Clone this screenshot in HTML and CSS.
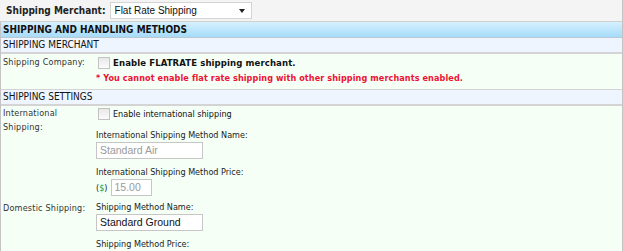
FILE: index.html
```html
<!DOCTYPE html>
<html lang="en">
<head>
    <meta charset="UTF-8">
    <title>Shipping and Handling Methods</title>
    <link rel="stylesheet" href="styles.css">
</head>
<body>
    <div class="page">
        <div class="toolbar">
            <label class="toolbar-label" for="merchant">Shipping Merchant:</label>
            <div class="select">
                <span>Flat Rate Shipping</span>
                <span class="arrow"></span>
            </div>
        </div>

        <div class="panel">
            <div class="panel-title">SHIPPING AND HANDLING METHODS</div>

            <div class="section-title">SHIPPING MERCHANT</div>
            <div class="section-body">
                <div class="row">
                    <div class="row-label">Shipping Company:</div>
                    <div class="row-field">
                        <div class="check-line">
                            <span class="checkbox"></span>
                            <b>Enable FLATRATE shipping merchant.</b>
                        </div>
                        <div class="warning">* You cannot enable flat rate shipping with other shipping merchants enabled.</div>
                    </div>
                </div>
            </div>

            <div class="section-title">SHIPPING SETTINGS</div>
            <div class="section-body settings">
                <div class="row">
                    <div class="row-label">International<br>Shipping:</div>
                    <div class="row-field">
                        <div class="check-line">
                            <span class="checkbox"></span>
                            Enable international shipping
                        </div>
                        <div class="group">
                            <div class="field-label">International Shipping Method Name:</div>
                            <div class="input wide disabled">Standard Air</div>
                        </div>
                        <div class="group">
                            <div class="field-label">International Shipping Method Price:</div>
                            <div class="price-line">
                                <span class="currency">(<span class="dollar">$</span>)</span>
                                <div class="input short disabled">15.00</div>
                            </div>
                        </div>
                    </div>
                </div>
                <div class="row domestic">
                    <div class="row-label">Domestic Shipping:</div>
                    <div class="row-field">
                        <div class="group first">
                            <div class="field-label">Shipping Method Name:</div>
                            <div class="input wide">Standard Ground</div>
                        </div>
                        <div class="group">
                            <div class="field-label">Shipping Method Price:</div>
                            <div class="price-line">
                                <span class="currency">(<span class="dollar">$</span>)</span>
                                <div class="input short">10.00</div>
                            </div>
                        </div>
                    </div>
                </div>
            </div>
        </div>
    </div>
</body>
</html>
```

FILE: styles.css
```css
body {
    margin: 0;
    font-family: "DejaVu Sans Condensed", "DejaVu Sans", sans-serif;
    font-size: 9px;
    color: #222;
    background-color: #f5fff6;
}
.page {
    border-right: 1px solid #c4c4c4;
    height: 251px;
    overflow: hidden;
    background-color: #f5fff6;
}
.toolbar {
    display: flex;
    align-items: center;
    gap: 4px;
    height: 21px;
    padding-left: 6px;
    background-color: #f4f4f4;
    border-bottom: 1px solid #cfcfcf;
}
.toolbar-label {
    font-weight: bold;
    font-size: 10px;
}
.select {
    display: flex;
    align-items: center;
    justify-content: space-between;
    box-sizing: border-box;
    width: 142px;
    height: 17px;
    padding: 0 6px 0 4px;
    background-color: #fff;
    border: 1px solid #d4d4d4;
    font-family: "Liberation Sans", Arial, sans-serif;
    font-size: 10px;
    color: #111;
}
.arrow {
    width: 0;
    height: 0;
    border-left: 3px solid transparent;
    border-right: 3px solid transparent;
    border-top: 4px solid #222;
}
.panel {
    border-left: 1px solid #c4c4c4;
}
.panel-title {
    height: 15px;
    line-height: 15px;
    padding-left: 2px;
    font-weight: bold;
    font-size: 10px;
    color: #111;
    background: linear-gradient(#d6f0fe, #a6dbfa);
    border-bottom: 1px solid #bcc8d0;
}
.section-title {
    height: 14px;
    line-height: 14px;
    padding-left: 2px;
    font-size: 10px;
    color: #111;
    background-color: #eef5ff;
    border-bottom: 2px solid #d4d4d4;
}
.section-body {
    padding: 1px 0 4px;
    border-bottom: 1px solid #d4d4d4;
}
.settings {
    border-bottom: none;
    padding-top: 0;
}
.row {
    display: flex;
    line-height: 14px;
}
.row-label {
    width: 93px;
    padding-left: 2px;
    flex-shrink: 0;
    color: #333;
    letter-spacing: 0.2px;
}
.row-field {
    flex: 1;
}
.check-line {
    display: flex;
    align-items: center;
    gap: 3px;
    padding-left: 2px;
    height: 16px;
    color: #111;
}
.check-line b {
    font-size: 9.5px;
    letter-spacing: 0.1px;
}
.checkbox {
    box-sizing: border-box;
    width: 12px;
    height: 12px;
    border: 1px solid #c2c2c2;
    background: linear-gradient(#e8e8e8, #fbfbfb);
}
.warning {
    font-weight: bold;
    color: #ee1133;
    letter-spacing: 0.1px;
}
.group {
    margin-top: 7px;
}
.group.first {
    margin-top: 0;
}
.field-label {
    line-height: 13px;
    color: #222;
}
.input {
    box-sizing: border-box;
    height: 17px;
    line-height: 15px;
    padding: 0 3px;
    background-color: #fff;
    border: 1px solid #c6c6c6;
    font-family: "Liberation Sans", Arial, sans-serif;
    font-size: 10.5px;
    color: #111;
}
.input.wide {
    width: 107px;
}
.input.short {
    width: 41px;
}
.input.disabled {
    color: #9a9a9a;
}
.price-line {
    display: flex;
    align-items: center;
    gap: 3px;
}
.dollar {
    color: #1a9a1a;
}
.domestic {
    margin-top: 5px;
}
```
